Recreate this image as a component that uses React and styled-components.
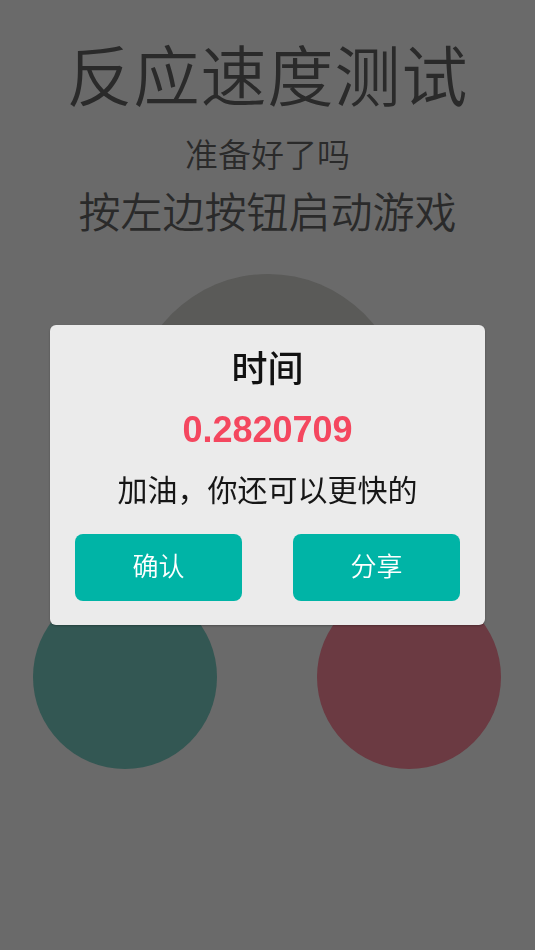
import React from 'react'
import styled, { createGlobalStyle } from 'styled-components'

const GlobalStyle = createGlobalStyle`
    html, body {
        margin: 0;
        padding: 0;
        background: #6a6a6a;
    }
    body {
        font-family: "Noto Sans CJK SC", "Noto Sans", sans-serif;
    }
`

function App() {
    return (
        <Page>
            <GlobalStyle />
            <Header>
                <Title>反应速度测试</Title>
                <SubTitle>准备好了吗</SubTitle>
                <Hint>按左边按钮启动游戏</Hint>
            </Header>
            <Board>
                <Circle size={272} color="#5a5a58" />
                <PadRow>
                    <Circle size={184} color="#335753" />
                    <Circle size={184} color="#6b3a42" />
                </PadRow>
            </Board>
            <Overlay>
                <Dialog>
                    <DialogTitle>时间</DialogTitle>
                    <Score>0.2820709</Score>
                    <Message>加油，你还可以更快的</Message>
                    <Actions>
                        <ActionButton>确认</ActionButton>
                        <ActionButton>分享</ActionButton>
                    </Actions>
                </Dialog>
            </Overlay>
        </Page>
    )
}

const Page = styled.div`
    width: 100%;
    height: 950px;
    background: #6a6a6a;
    overflow: hidden;
`

const Header = styled.header`
    display: flex;
    flex-direction: column;
    align-items: center;
    padding-top: 32px;
    color: #2a2a2a;
    font-weight: 350;
`

const Title = styled.h1`
    margin: 0;
    font-size: 66px;
    line-height: 80px;
    font-weight: 350;
    letter-spacing: 1px;
`

const SubTitle = styled.p`
    margin: 19px 0 0;
    font-size: 33px;
    line-height: 44px;
`

const Hint = styled.p`
    margin: 8px 0 0;
    font-size: 42px;
    line-height: 54px;
`

const Board = styled.section`
    display: flex;
    flex-direction: column;
    align-items: center;
    margin-top: 37px;
`

const Circle = styled.div`
    width: ${p => p.size}px;
    height: ${p => p.size}px;
    border-radius: 50%;
    background: ${p => p.color};
`

const PadRow = styled.div`
    align-self: stretch;
    display: flex;
    justify-content: space-between;
    padding: 0 34px 0 33px;
    margin-top: 39px;
`

const Overlay = styled.div`
    position: fixed;
    inset: 0;
    display: flex;
    justify-content: center;
    align-items: center;
`

const Dialog = styled.div`
    width: 435px;
    box-sizing: border-box;
    padding: 18px 25px 24px;
    background: #ebebeb;
    border-radius: 6px;
    box-shadow: 0 1px 2px rgba(0, 0, 0, 0.25);
    text-align: center;
`

const DialogTitle = styled.h2`
    margin: 0;
    font-size: 36px;
    line-height: 46px;
    font-weight: 500;
    color: #111;
`

const Score = styled.p`
    margin: 19px 0 0;
    font-family: "Liberation Sans", Arial, sans-serif;
    font-size: 36px;
    line-height: 44px;
    font-weight: 700;
    color: #f4475f;
`

const Message = styled.p`
    margin: 16px 0 0;
    font-size: 30px;
    line-height: 40px;
    color: #161616;
`

const Actions = styled.div`
    display: grid;
    grid-template-columns: 167px 167px;
    justify-content: space-between;
    margin-top: 26px;
`

const ActionButton = styled.button`
    height: 67px;
    padding: 0 0 7px;
    border: none;
    border-radius: 8px;
    background: #00b4a6;
    color: #fff;
    font-family: "Noto Sans CJK SC", sans-serif;
    font-size: 26px;
    font-weight: 350;
    cursor: pointer;
`

export default App
